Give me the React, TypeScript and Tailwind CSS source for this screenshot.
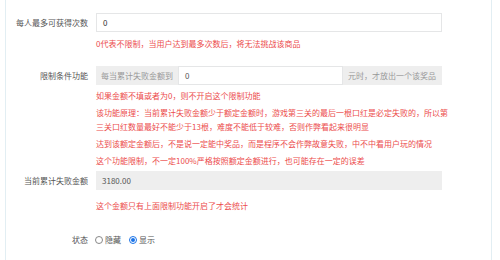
import React from "react";

const font = { fontFamily: '"Noto Sans CJK SC", "Noto Sans", sans-serif' };

function Label({ children }: { children: React.ReactNode }) {
  return (
    <div className="w-[82px] shrink-0 text-right text-[8px] leading-[19px] text-[#555]">{children}</div>
  );
}

export default function App() {
  return (
    <div className="w-[500px] h-[260px] bg-white overflow-hidden" style={font}>
      <div className="ml-[5px] w-[487px] h-full border-l border-r border-[#e2eef3] bg-white">
        {/* Row 1 */}
        <div className="flex pt-[13px]">
          <Label>每人最多可获得次数</Label>
          <div className="ml-[8px] w-[346px]">
            <div className="h-[19px] border border-[#e5e6e7] bg-white px-[6px] text-[8px] leading-[17px] text-[#333]">0</div>
            <p className="mt-[5px] text-[8px] leading-[14px] text-[#ec4c4c]">
              0代表不限制，当用户达到最多次数后，将无法挑战该商品
            </p>
          </div>
        </div>
        {/* Row 2 */}
        <div className="flex pt-[15px]">
          <Label>限制条件功能</Label>
          <div className="ml-[8px] w-[346px]">
            <div className="flex h-[19px] text-[8px]">
              <div className="w-[82px] shrink-0 bg-[#eeeeee] px-[5px] leading-[19px] text-[#999]">每当累计失败金额到</div>
              <div className="flex-1 border border-[#e5e6e7] bg-white px-[6px] leading-[17px] text-[#555]">0</div>
              <div className="w-[99px] shrink-0 bg-[#eeeeee] px-[5px] leading-[19px] text-[#999]">元时，才放出一个该奖品</div>
            </div>
            <div className="mt-[4px] w-[352px] text-[8px] leading-[14px] text-[#ec4c4c]">
              <p>如果金额不填或者为0，则不开启这个限制功能</p>
              <p className="mt-[3px]">
                该功能原理：当前累计失败金额少于额定金额时，游戏第三关的最后一根口红是必定失败的，所以第三关口红数量最好不能少于13根，难度不能低于较难，否则作弊看起来很明显
              </p>
              <p className="mt-[3px]">达到该额定金额后，不是说一定能中奖品，而是程序不会作弊故意失败，中不中看用户玩的情况</p>
              <p className="mt-[3px]">这个功能限制，不一定100%严格按照额定金额进行，也可能存在一定的误差</p>
            </div>
          </div>
        </div>
        {/* Row 3 */}
        <div className="flex pt-[3px]">
          <Label>当前累计失败金额</Label>
          <div className="ml-[8px] w-[346px]">
            <div className="h-[19px] bg-[#eeeeee] px-[6px] text-[8px] leading-[19px] text-[#555]">3180.00</div>
            <p className="mt-[9px] text-[8px] leading-[14px] text-[#ec4c4c]">这个金额只有上面限制功能开启了才会统计</p>
          </div>
        </div>
        {/* Row 4 */}
        <div className="flex pt-[17px]">
          <Label>状态</Label>
          <div className="ml-[7px] flex items-center gap-[8px] text-[8px] leading-[19px] text-[#555]">
            <label className="flex items-center gap-[2px]">
              <span className="w-[8px] h-[8px] rounded-full border border-[#888] bg-white" />
              <span>隐藏</span>
            </label>
            <label className="flex items-center gap-[2px]">
              <span className="w-[8px] h-[8px] rounded-full border border-[#1a73e8] bg-white flex items-center justify-center">
                <span className="w-[4px] h-[4px] rounded-full bg-[#1a73e8]" />
              </span>
              <span>显示</span>
            </label>
          </div>
        </div>
      </div>
    </div>
  );
}
